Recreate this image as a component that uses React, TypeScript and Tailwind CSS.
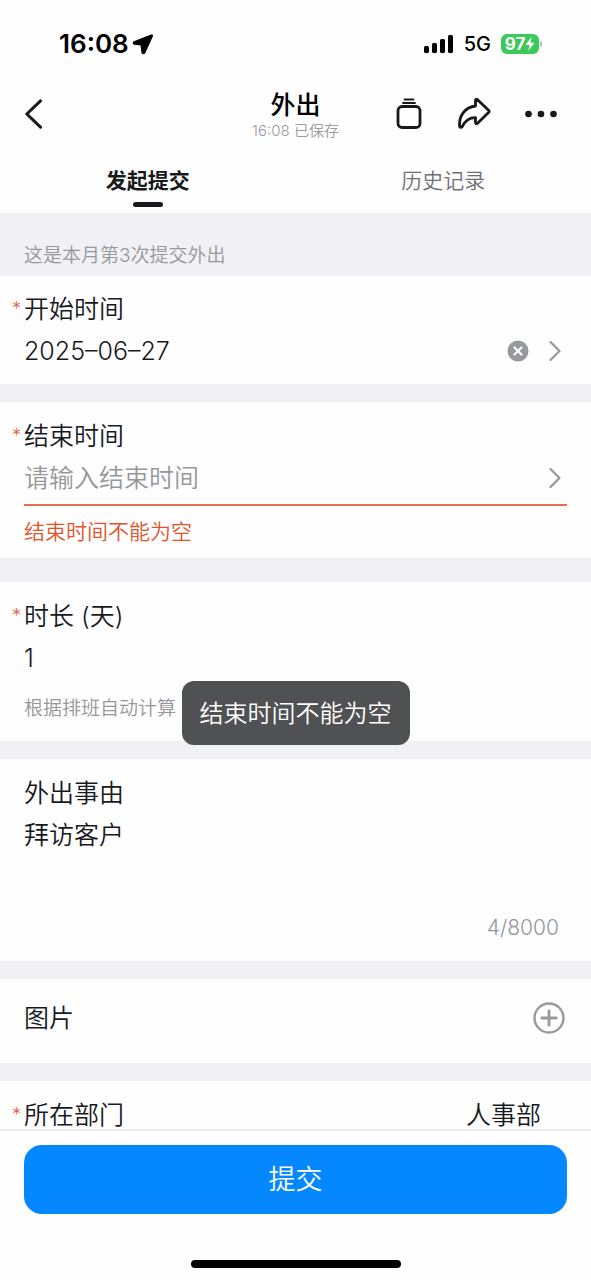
import React from 'react';

function StatusBar() {
  return (
    <div className="flex h-20 items-center justify-between pt-2 pl-[59px] pr-[49px] text-black">
      <div className="flex items-center gap-[3px]">
        <span className="text-[26px] font-semibold leading-8">16:08</span>
        <svg width="22" height="22" viewBox="0 0 22 22" aria-hidden="true">
          <path
            d="M19.300 2 2 8.800c-1 .5-.8 2.200.4 2.300L8.500 12c.4.100.7.400.7.800l.8 6.800c.3 1.200 2.300 1.300 2.800.2L20.300 3.200C20.700 2.400 20 1.700 19.300 2Z"
            fill="currentColor"
            stroke="currentColor"
            strokeWidth="1.200"
            strokeLinejoin="round"
          />
        </svg>
      </div>
      <div className="flex items-center gap-2.5">
        <svg width="30" height="20" viewBox="0 0 30 20" fill="currentColor" aria-hidden="true">
          <rect x="0" y="12" width="5" height="7" rx="1.500" />
          <rect x="8" y="9" width="5" height="10" rx="1.500" />
          <rect x="16" y="5" width="5" height="14" rx="1.500" />
          <rect x="24" y="1" width="5" height="18" rx="1.500" />
        </svg>
        <span className="text-xl font-medium leading-6">5G</span>
        <div className="flex items-center gap-px">
          <div className="flex h-5 w-[38px] items-center justify-center rounded-md bg-[#3cc85a] text-white">
            <span className="text-[17px] font-bold leading-5">97</span>
            <svg width="10" height="14" viewBox="0 0 10 14" fill="currentColor" aria-hidden="true">
              <path d="M6.500 0 .5 8h4L3.300 14 9.500 5.800H5.600Z" />
            </svg>
          </div>
          <div className="h-1.5 w-0.5 rounded-r-full bg-[#b9b9bb]" />
        </div>
      </div>
    </div>
  );
}

function Header() {
  return (
    <header className="grid h-[68px] grid-cols-[1fr_auto_1fr] items-center">
      <button type="button" aria-label="返回" className="ml-6 w-5 justify-self-start">
        <svg width="20" height="30" viewBox="0 0 20 30" fill="none" stroke="currentColor" strokeWidth="3">
          <path d="M16.500 1.800 2.800 15l13.700 13.200" strokeLinecap="round" strokeLinejoin="round" />
        </svg>
      </button>
      <div className="pt-0.5 text-center">
        <h1 className="text-[25px] font-medium leading-8 text-black">外出</h1>
        <p className="text-[15px] font-[350] leading-5 text-[#9b9ba0]">16:08 已保存</p>
      </div>
      <div className="mr-[34px] flex items-center gap-[34px] justify-self-end">
        <button type="button" aria-label="草稿">
          <svg width="27" height="32" viewBox="0 0 27 32" fill="none" stroke="currentColor" strokeLinecap="round">
            <path d="M8.500 1.500h9M7 5h12" strokeWidth="1.800" />
            <rect x="2" y="8.500" width="22" height="21" rx="4" strokeWidth="2.800" />
          </svg>
        </button>
        <button type="button" aria-label="分享">
          <svg width="34" height="32" viewBox="0 0 34 32" fill="none" stroke="currentColor" strokeWidth="2.800">
            <path
              d="M18.500 2.300c0-1 1-1.500 1.800-.8l11.500 11.100c.5.500.5 1.200 0 1.700L20.300 25.400c-.8.700-1.800.2-1.800-.8v-5C12 19.400 8.300 22.500 5.300 28.500c-.5 1.300-2.500 1.200-2.700-.3C1.800 18 8 9 18.500 8Z"
              strokeLinejoin="round"
            />
          </svg>
        </button>
        <button type="button" aria-label="更多">
          <svg width="32" height="8" viewBox="0 0 32 8" fill="currentColor">
            <circle cx="3.500" cy="4" r="3.300" />
            <circle cx="16" cy="4" r="3.300" />
            <circle cx="28.500" cy="4" r="3.300" />
          </svg>
        </button>
      </div>
    </header>
  );
}

function Tabs() {
  return (
    <nav role="tablist" className="grid h-[65px] grid-cols-2 text-[21px] leading-8">
      <button type="button" role="tab" aria-selected="true" className="flex flex-col items-center pt-[17px] font-bold">
        发起提交
        <span className="mt-[5px] h-[5px] w-[30px] rounded-full bg-[#17191d]" />
      </button>
      <button type="button" role="tab" aria-selected="false" className="flex flex-col items-center pt-[17px] font-[350] text-[#6f7074]">
        历史记录
      </button>
    </nav>
  );
}

function FieldLabel({ id, required, children }: { id: string; required?: boolean; children: React.ReactNode }) {
  return (
    <label htmlFor={id} className="-ml-3 flex">
      <span className="w-3 text-lg leading-[inherit] text-[#e2603a]">{required ? '*' : ''}</span>
      {children}
    </label>
  );
}

function Chevron() {
  return (
    <svg width="12" height="20" viewBox="0 0 12 20" fill="none" stroke="#98999c" strokeWidth="2.200" aria-hidden="true">
      <path d="M1.500 1 10.500 10l-9 9" strokeLinecap="round" strokeLinejoin="round" />
    </svg>
  );
}

export default function App() {
  return (
    <div className="flex h-screen flex-col bg-[#fefefe] font-['Inter','Noto_Sans_CJK_SC',sans-serif] text-[#17191d]">
      <StatusBar />
      <Header />
      <Tabs />

      <form id="outing" className="min-h-0 flex-1 overflow-y-auto bg-[#f0f0f5] text-[25px] font-[350] leading-[42px] [scrollbar-width:none]">
        <p className="px-6 pt-[23px] text-[19px] leading-10 text-[#96979b]">这是本月第3次提交外出</p>

        <section className="bg-[#fefefe] px-6 py-3">
          <FieldLabel id="start" required>开始时间</FieldLabel>
          <div className="flex items-center pr-1.5">
            <input id="start" readOnly defaultValue="2025–06–27" className="h-[42px] min-w-0 flex-1 outline-none" />
            <button type="button" aria-label="清除" className="mr-5">
              <svg width="22" height="22" viewBox="0 0 22 22">
                <circle cx="11" cy="11" r="10.500" fill="#98999c" />
                <path d="m7.500 7.500 7 7m0-7-7 7" stroke="white" strokeWidth="2.200" strokeLinecap="round" />
              </svg>
            </button>
            <Chevron />
          </div>
        </section>

        <section className="mt-[18px] bg-[#fefefe] px-6 pt-[13px]">
          <FieldLabel id="end" required>结束时间</FieldLabel>
          <div className="flex items-center border-b-2 border-[#e2704f] pr-1.5 pb-[5px]">
            <input
              id="end"
              readOnly
              placeholder="请输入结束时间"
              aria-invalid="true"
              aria-describedby="end-error"
              className="h-[42px] min-w-0 flex-1 outline-none placeholder:text-[#96979b]"
            />
            <Chevron />
          </div>
          <p id="end-error" className="text-[21px] leading-[52px] text-[#e2532a]">结束时间不能为空</p>
        </section>

        <section className="mt-6 bg-[#fefefe] px-6 pt-[13px] pb-3">
          <FieldLabel id="days" required>时长 (天)</FieldLabel>
          <input id="days" defaultValue="1" className="block h-[42px] w-full outline-none" />
          <p className="mt-2.5 text-[19px] leading-10 text-[#96979b]">根据排班自动计算</p>
        </section>

        <section className="mt-[18px] bg-[#fefefe] px-6 pt-[13px] pb-[11px]">
          <FieldLabel id="reason">外出事由</FieldLabel>
          <textarea id="reason" defaultValue="拜访客户" className="block h-[92px] w-full resize-none outline-none" />
          <p className="pr-2 text-right text-[21px] leading-[44px] text-[#96979b]">4/8000</p>
        </section>

        <section className="mt-[18px] flex h-[84px] items-center justify-between bg-[#fefefe] pr-[26px] pb-1.5 pl-6">
          <h2>图片</h2>
          <button type="button" aria-label="添加图片">
            <svg width="32" height="32" viewBox="0 0 32 32" fill="none" stroke="#98999c" strokeLinecap="round">
              <circle cx="16" cy="16" r="14.500" strokeWidth="2.400" />
              <path d="M16 8.800v14.400M8.800 16h14.400" strokeWidth="2.800" />
            </svg>
          </button>
        </section>

        <section className="mt-[18px] flex justify-between bg-[#fefefe] pt-5 pr-[50px] pl-6 leading-7">
          <FieldLabel id="department" required>所在部门</FieldLabel>
          <select id="department" className="h-7 appearance-none text-right outline-none">
            <option>人事部</option>
          </select>
        </section>
      </form>

      <footer className="border-t-2 border-[#ececee] px-6 pt-3.5 pb-3">
        <button
          type="submit"
          form="outing"
          className="h-[69px] w-full rounded-[18px] bg-[#0588ff] pt-0.5 text-[27px] font-[350] text-white"
        >
          提交
        </button>
        <div className="mx-auto mt-[46px] h-2 w-[210px] rounded-full bg-black" />
      </footer>

      <div className="pointer-events-none fixed inset-x-0 top-[681px] flex justify-center">
        <div role="alert" className="rounded-xl bg-[#505153] px-[18px] pt-0.5 text-2xl font-[350] leading-[62px] text-white">
          结束时间不能为空
        </div>
      </div>
    </div>
  );
}
